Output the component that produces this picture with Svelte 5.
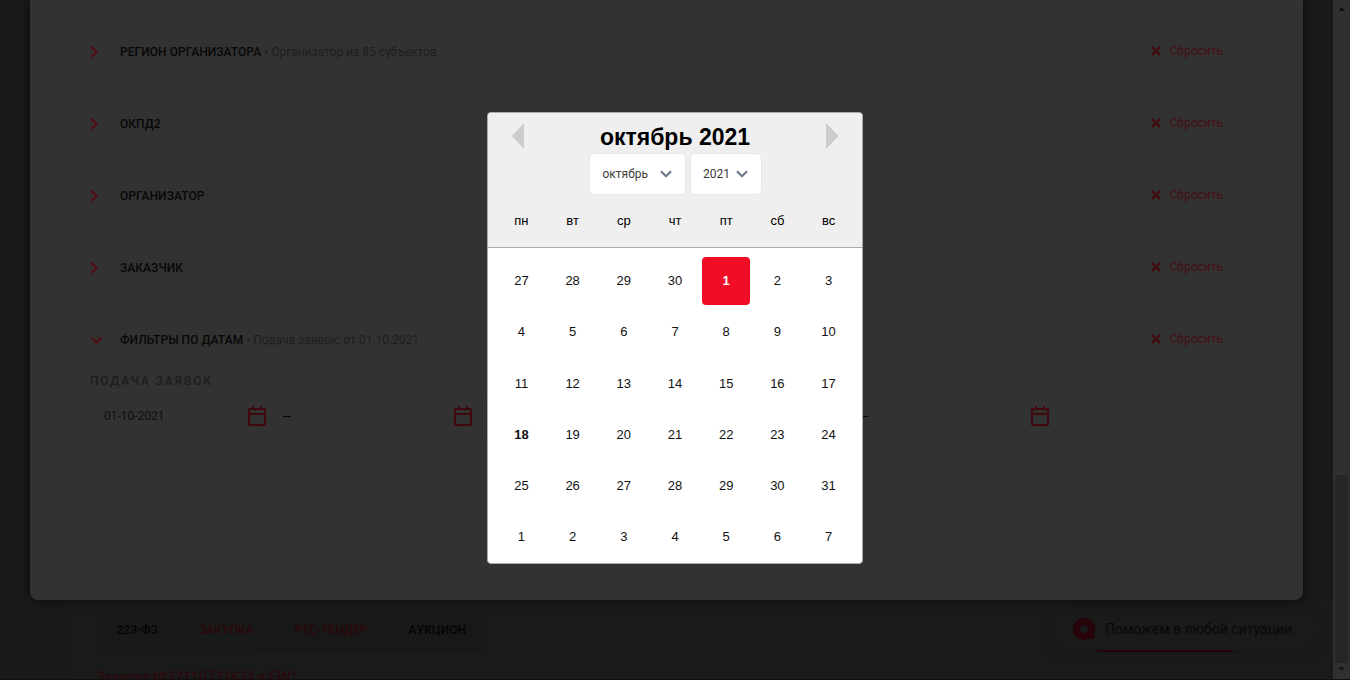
<script>
  const filters = [
    { title: 'РЕГИОН ОРГАНИЗАТОРА', note: 'Организатор из 85 субъектов' },
    { title: 'ОКПД2' },
    { title: 'ОРГАНИЗАТОР' },
    { title: 'ЗАКАЗЧИК' },
    { title: 'ФИЛЬТРЫ ПО ДАТАМ', note: 'Подача заявок: от 01.10.2021', open: true }
  ];
  const weekdays = ['пн', 'вт', 'ср', 'чт', 'пт', 'сб', 'вс'];
  const days = [27, 28, 29, 30, ...Array.from({ length: 31 }, (_, i) => i + 1), 1, 2, 3, 4, 5, 6, 7];
  const ranges = [['01-10-2021', ''], ['', '']];
</script>

<div class="page">
  <div class="behind">
    <div class="card">
      <div class="tags">
        <span class="tag a">223-ФЗ</span>
        <span class="tag b">ЗАКУПКА</span>
        <span class="tag c">РТС-ТЕНДЕР</span>
        <span class="tag d">АУКЦИОН</span>
      </div>
      <div class="purchase">Закупка №32110733832 в ЕИС</div>
    </div>
    <div class="underline"></div>
    <div class="help">
      <svg width="22" height="22" viewBox="0 0 22 22"><path fill="#280308" fill-rule="evenodd" d="M11 0a11 11 0 0 1 9.3 16.9L22 21l-5-.8A11 11 0 1 1 11 0zm0 6.8a4.2 4.2 0 1 0 0 8.4 4.2 4.2 0 0 0 0-8.4z" /></svg>
      <span>Поможем в любой ситуации</span>
    </div>
  </div>

  <main class="modal">
    {#each filters as f}
      <div class="row">
        {#if f.open}
          <svg class="chev" width="12" height="12" viewBox="0 0 12 12"><path d="M1.5 3.5 6.5 8.5 11.5 3.5" /></svg>
        {:else}
          <svg class="chev" width="12" height="12" viewBox="0 0 12 12"><path d="M1.5 .7 6.5 5.7 1.5 10.7" /></svg>
        {/if}
        <span class="title">{f.title}</span>
        {#if f.note}<span class="note">&nbsp;• {f.note}</span>{/if}
        <span class="reset">
          <svg width="10" height="10" viewBox="0 0 10 10"><path d="M.7.7 9.3 9.3M9.3.7.7 9.3" /></svg>
          Сбросить
        </span>
      </div>
    {/each}
    <div class="dates">
      <div class="label">ПОДАЧА ЗАЯВОК</div>
      <div class="ranges">
        {#each ranges as pair}
          <div class="pair">
            {#each pair as value, i}
              {#if i}<span class="dash"></span>{/if}
              <div class="field">
                <span>{value}</span>
                <svg width="18" height="20" viewBox="0 0 18 20"><path d="M2 3h14q1 0 1 1v14q0 1-1 1H2q-1 0-1-1V4q0-1 1-1zM1 8h16M5 0v3M13 0v3" /></svg>
              </div>
            {/each}
          </div>
        {/each}
      </div>
    </div>
  </main>

  <div class="scrollbar">
    <svg width="7" height="4" viewBox="0 0 7 4"><path fill="#101010" d="M0 4 3.5 0 7 4z" /></svg>
    <div class="thumb"></div>
    <svg width="7" height="4" viewBox="0 0 7 4"><path fill="#191919" d="M0 0h7L3.5 4z" /></svg>
  </div>

  <section class="calendar">
    <header>
      <div class="head">
        <svg width="13" height="26" viewBox="0 0 13 26"><path fill="#ccc" d="M13 0v26L.6 13z" /></svg>
        <h1>октябрь 2021</h1>
        <svg width="13" height="26" viewBox="0 0 13 26"><path fill="#ccc" d="M0 0v26l12.5-13z" /></svg>
      </div>
      <div class="selects">
        <div class="select month">октябрь <svg width="12" height="8" viewBox="0 0 12 8"><path d="M1 1.2 6 6.2 11 1.2" /></svg></div>
        <div class="select year">2021 <svg width="12" height="8" viewBox="0 0 12 8"><path d="M1 1.2 6 6.2 11 1.2" /></svg></div>
      </div>
      <div class="week">
        {#each weekdays as d}<span>{d}</span>{/each}
      </div>
    </header>
    <div class="days">
      {#each days as d, i}
        <div class="day" class:selected={i === 4} class:today={i === 21}><span>{d}</span></div>
      {/each}
    </div>
  </section>
</div>

<style>
  :global(body) { margin: 0; overflow: hidden; }
  * { box-sizing: border-box; }
  svg { display: block; flex: none; }
  .page { position: relative; width: 1350px; height: 680px; overflow: hidden; background: #191919; font-family: Roboto, sans-serif; border-bottom: 1px solid #130f10; }
  .behind { position: absolute; inset: 600px 17px 0 0; overflow: hidden; }
  .card { margin-left: 67px; padding: 5px 0 0 30px; height: 80px; background: #1a1a1a; }
  .tags { display: flex; width: 389px; height: 47px; background: #181818; border-radius: 0 0 4px 4px; font-size: 12px; line-height: 50px; font-weight: 500; color: #040404; }
  .tag.a { width: 82px; padding-left: 19.5px; background: #181a1a; border-right: 1px solid #161818; }
  .tag.b { width: 76px; padding-left: 20px; background: #181a1a; color: #2c060a; }
  .tag.c { width: 133px; padding-left: 39.5px; color: #2c060a; }
  .tag.d { padding-left: 20.5px; }
  .purchase { margin: 15px 0 0 -1px; font-size: 14px; line-height: 20px; color: #2c060a; }
  .help { position: absolute; left: 1050px; top: 8px; width: 270px; height: 42px; padding-left: 23px; border-radius: 21px; background: #1a1a1a; box-shadow: 0 4px 14px rgba(0, 0, 0, .08); display: flex; align-items: center; gap: 10px; font-size: 14px; color: #080808; }
  .underline { position: absolute; left: 1096px; top: 42px; width: 139px; height: 10px; border-radius: 4px; background: #280408; }
  .modal { position: absolute; left: 30px; top: 0; width: 1273px; height: 600px; padding: 13px 80px 0 60px; background: #323232; border-radius: 0 0 8px 8px; box-shadow: 0 0 10px rgba(0, 0, 0, .6); }
  .row { height: 72px; padding-top: 5px; border-top: 1px solid #2d2e2e; display: flex; align-items: center; font-size: 12px; line-height: 16px; }
  .chev { margin-right: 18px; }
  .chev path { fill: none; stroke: #540d12; stroke-width: 2.2; }
  .title { font-weight: 500; letter-spacing: .04px; color: #080808; }
  .note { color: #1c1e20; }
  .reset { margin-left: auto; display: flex; align-items: center; gap: 9px; color: #470e13; position: relative; top: -1px; }
  .reset path { stroke: #40070c; stroke-width: 2; }
  .dates { height: 101px; border-bottom: 1px solid #2d2e2e; }
  .label { font-size: 12px; line-height: 16px; font-weight: 500; letter-spacing: 1.85px; color: #1b1d1f; }
  .ranges { display: flex; gap: 185px; padding-top: 5px; }
  .pair { display: flex; align-items: center; }
  .field { width: 187px; height: 44px; padding: 0 10px 0 13px; border: 1px solid #2e2e2e; border-radius: 5px; display: flex; align-items: center; justify-content: space-between; font-size: 12px; color: #101010; }
  .pair + .pair { margin-left: -1px; }
  .field path { fill: none; stroke: #40070c; stroke-width: 2; }
  .dash { width: 8px; height: 1px; margin: 0 5px 0 6px; background: #060606; }
  .scrollbar { position: absolute; right: 0; top: 0; width: 17px; height: 680px; background: #303030; padding: 7px 0 9px; display: flex; flex-direction: column; align-items: center; }
  .thumb { width: 13px; height: 188px; margin: auto 0 4px; background: #262626; }
  .calendar { position: absolute; left: 487px; top: 112px; width: 376px; height: 452px; border: 1px solid #aaa; border-radius: 4px; background: #fff; overflow: hidden; font-family: "Liberation Sans", Arial, sans-serif; color: #000; }
  header { height: 135px; background: #efefef; border-bottom: 1px solid #aaa; }
  .head { height: 40px; display: flex; justify-content: space-between; padding: 10px 23px 0; }
  h1 { margin: 0; font-size: 23px; line-height: 28px; font-weight: 700; }
  .selects { display: flex; gap: 4px; padding-left: 101px; }
  .select { height: 42px; background: #fff; background-clip: padding-box; border: 1px solid #e8e8e8; border-radius: 5px; padding: 0 13px 0 12.5px; display: flex; justify-content: space-between; align-items: center; font: 12px Roboto, sans-serif; color: #3a3a3a; }
  .month { width: 97px; }
  .year { width: 72px; padding-left: 12px; }
  .select path { fill: none; stroke: #6d788b; stroke-width: 2.2; }
  .week, .days { display: grid; grid-template-columns: repeat(7, 51.2px); justify-content: center; text-align: center; font-size: 13px; }
  .week { padding-top: 18px; line-height: 16px; }
  .days { padding-top: 7.7px; grid-auto-rows: 51.2px; color: #111; }
  .day { padding: 1.6px; }
  .day span { display: block; height: 48px; line-height: 48px; border-radius: 4px; }
  .today { font-weight: 700; }
  .selected span { background: #f20d26; color: #fff; font-weight: 700; }
</style>
